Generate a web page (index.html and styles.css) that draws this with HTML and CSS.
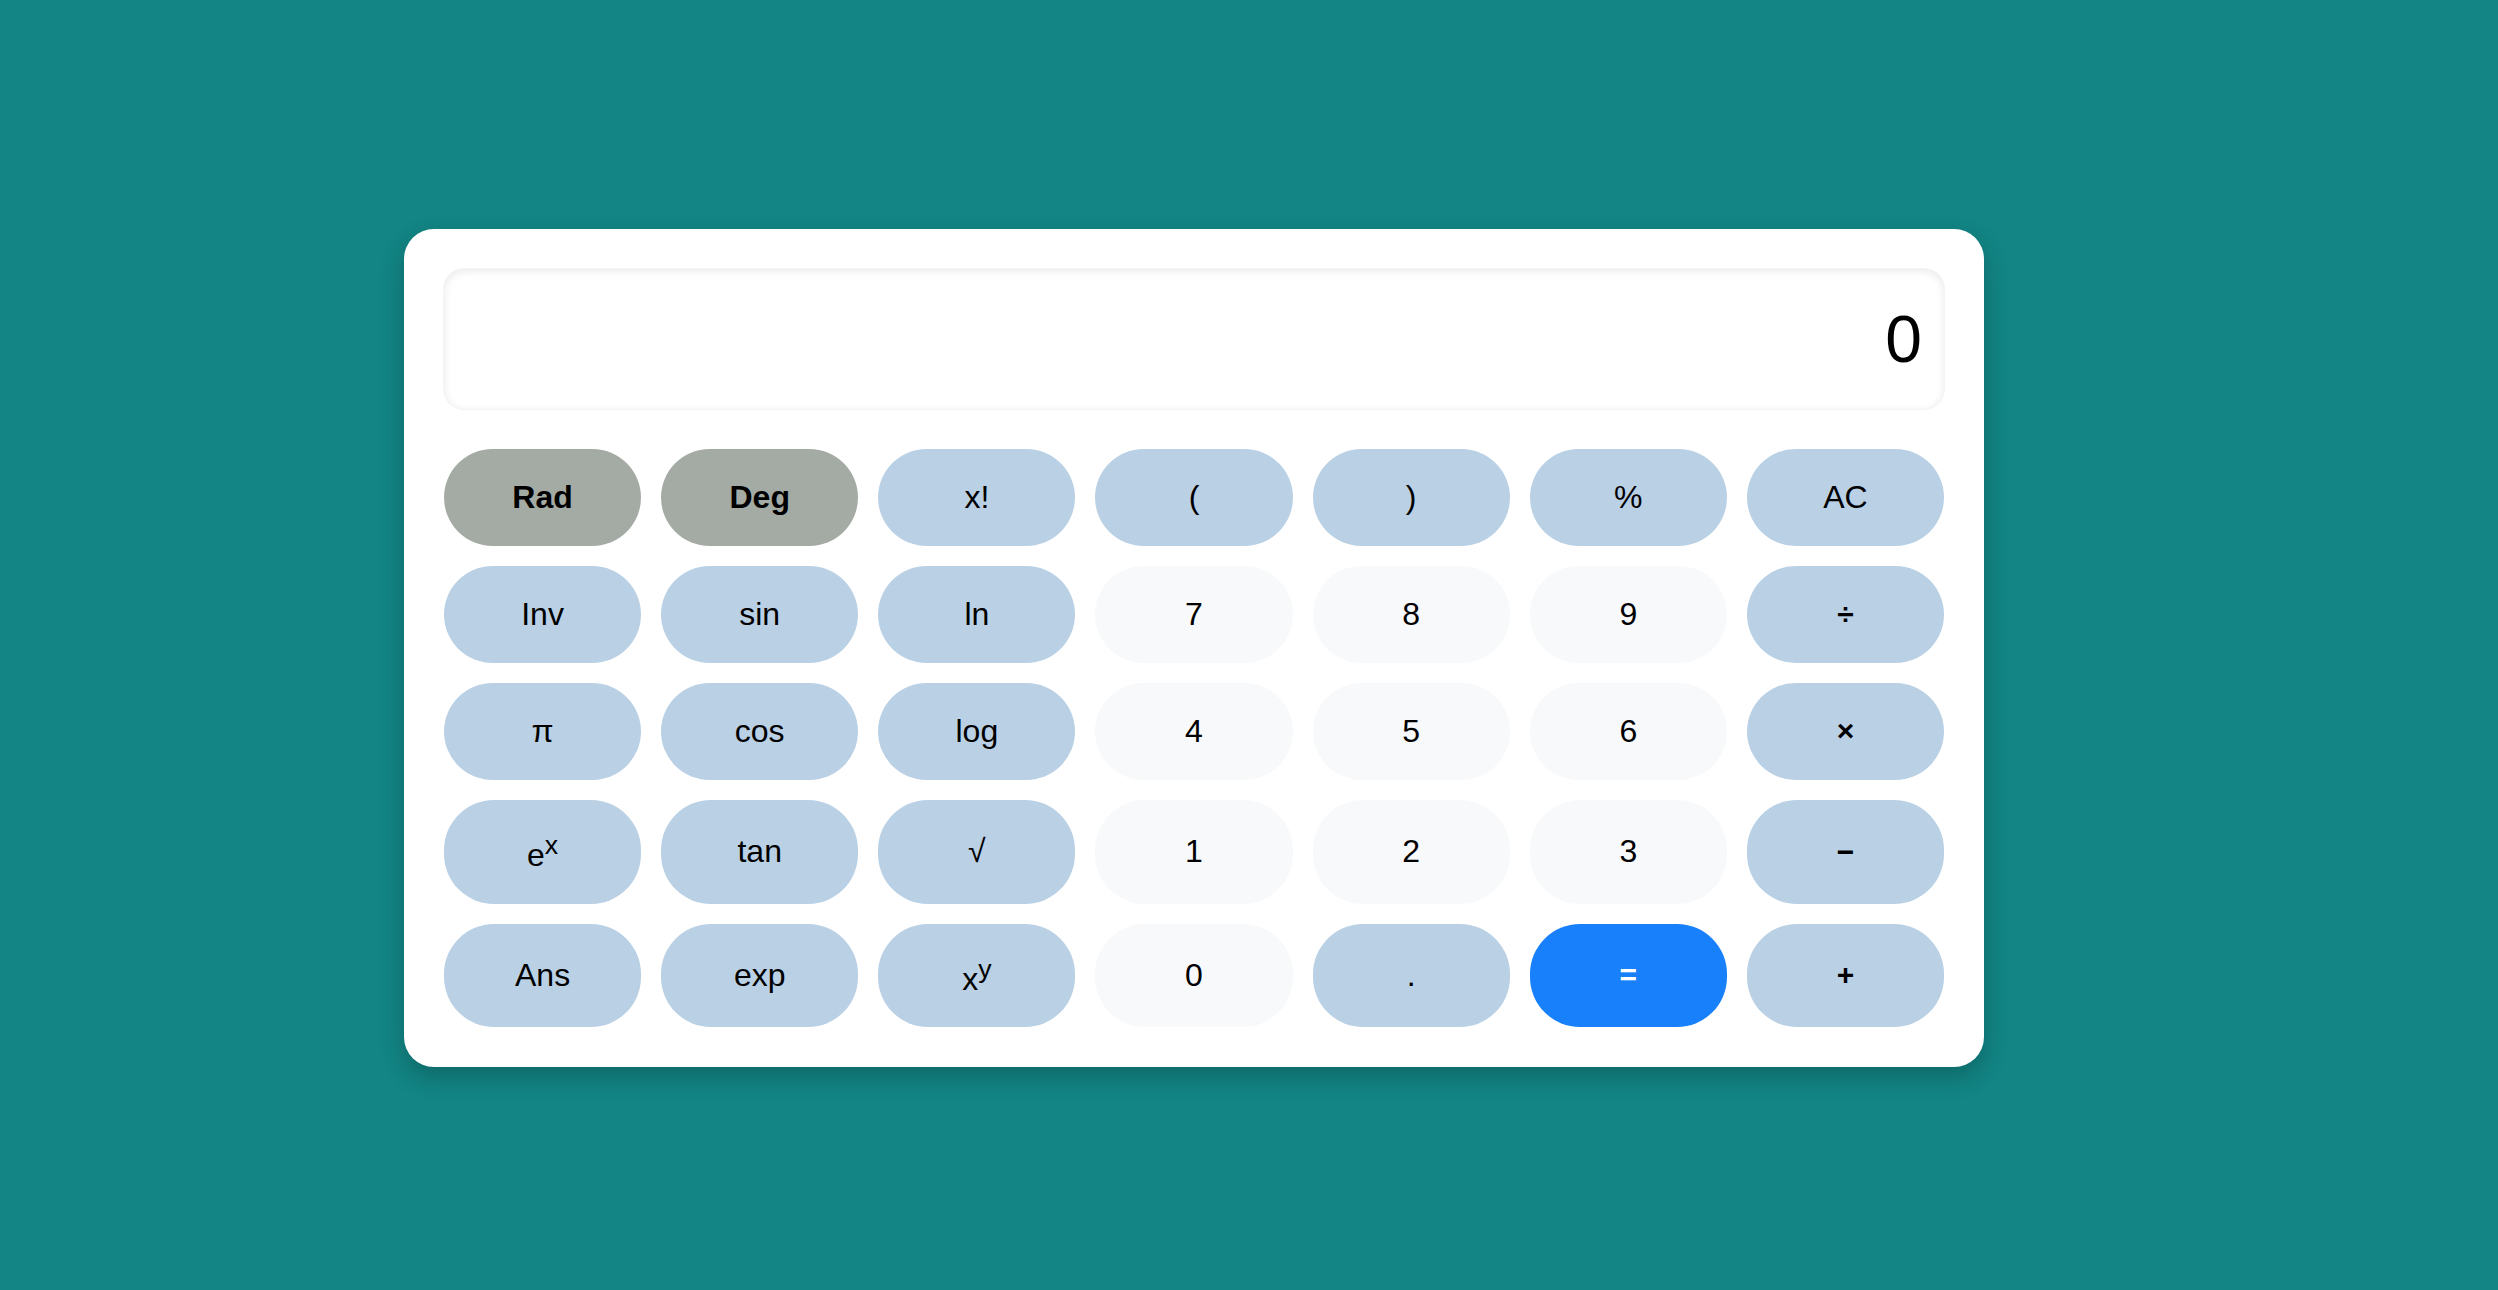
FILE: index.html
```html
<!DOCTYPE html>
<html lang="en">
<head>
<meta charset="utf-8">
<title>Calculator</title>
<link rel="stylesheet" href="styles.css">
</head>
<body>
<div class="page">
  <div class="calculator">
    <div class="display">0</div>
    <div class="keys">
      <button class="key mode">Rad</button>
      <button class="key mode">Deg</button>
      <button class="key fn">x!</button>
      <button class="key fn">(</button>
      <button class="key fn">)</button>
      <button class="key fn">%</button>
      <button class="key fn">AC</button>

      <button class="key fn">Inv</button>
      <button class="key fn">sin</button>
      <button class="key fn">ln</button>
      <button class="key num">7</button>
      <button class="key num">8</button>
      <button class="key num">9</button>
      <button class="key fn op">÷</button>

      <button class="key fn">π</button>
      <button class="key fn">cos</button>
      <button class="key fn">log</button>
      <button class="key num">4</button>
      <button class="key num">5</button>
      <button class="key num">6</button>
      <button class="key fn op">×</button>

      <button class="key fn">e<sup>x</sup></button>
      <button class="key fn">tan</button>
      <button class="key fn">√</button>
      <button class="key num">1</button>
      <button class="key num">2</button>
      <button class="key num">3</button>
      <button class="key fn op">−</button>

      <button class="key fn">Ans</button>
      <button class="key fn">exp</button>
      <button class="key fn">x<sup>y</sup></button>
      <button class="key num">0</button>
      <button class="key fn">.</button>
      <button class="key equals op">=</button>
      <button class="key fn op">+</button>
    </div>
  </div>
</div>
</body>
</html>
```

FILE: styles.css
```css
* {
  box-sizing: border-box;
}

html, body {
  margin: 0;
  padding: 0;
}

body {
  background: #128584;
  font-family: "Liberation Sans", Arial, sans-serif;
}

.page {
  min-height: 100vh;
  display: flex;
  align-items: center;
  padding-left: 404px;
  padding-top: 6px;
}

.calculator {
  width: 1580px;
  background: #ffffff;
  border-radius: 30px;
  padding: 40px;
  box-shadow: 0 10px 24px rgba(0, 0, 0, 0.22);
}

.display {
  height: 140px;
  border-radius: 20px;
  background: #ffffff;
  box-shadow: inset 0 2px 8px rgba(0, 0, 0, 0.09), 0 0 0 1px #f4f4f4;
  display: flex;
  align-items: center;
  justify-content: flex-end;
  padding: 0 22px;
  font-size: 66px;
  color: #000;
  margin-bottom: 40px;
}

.keys {
  display: grid;
  grid-template-columns: repeat(7, 1fr);
  gap: 20px;
}

.key {
  border: none;
  border-radius: 50px;
  padding: 30px 0;
  font-family: "Liberation Sans", Arial, sans-serif;
  font-size: 32px;
  line-height: normal;
  color: #000;
  cursor: pointer;
}

.mode {
  background: #a4aba4;
  font-weight: bold;
}

.fn {
  background: #b9d0e5;
}

.num {
  background: #f7f9fa;
}

.op {
  font-weight: bold;
  font-size: 30px;
}

.equals {
  background: #1780fa;
  color: #ffffff;
}
```
